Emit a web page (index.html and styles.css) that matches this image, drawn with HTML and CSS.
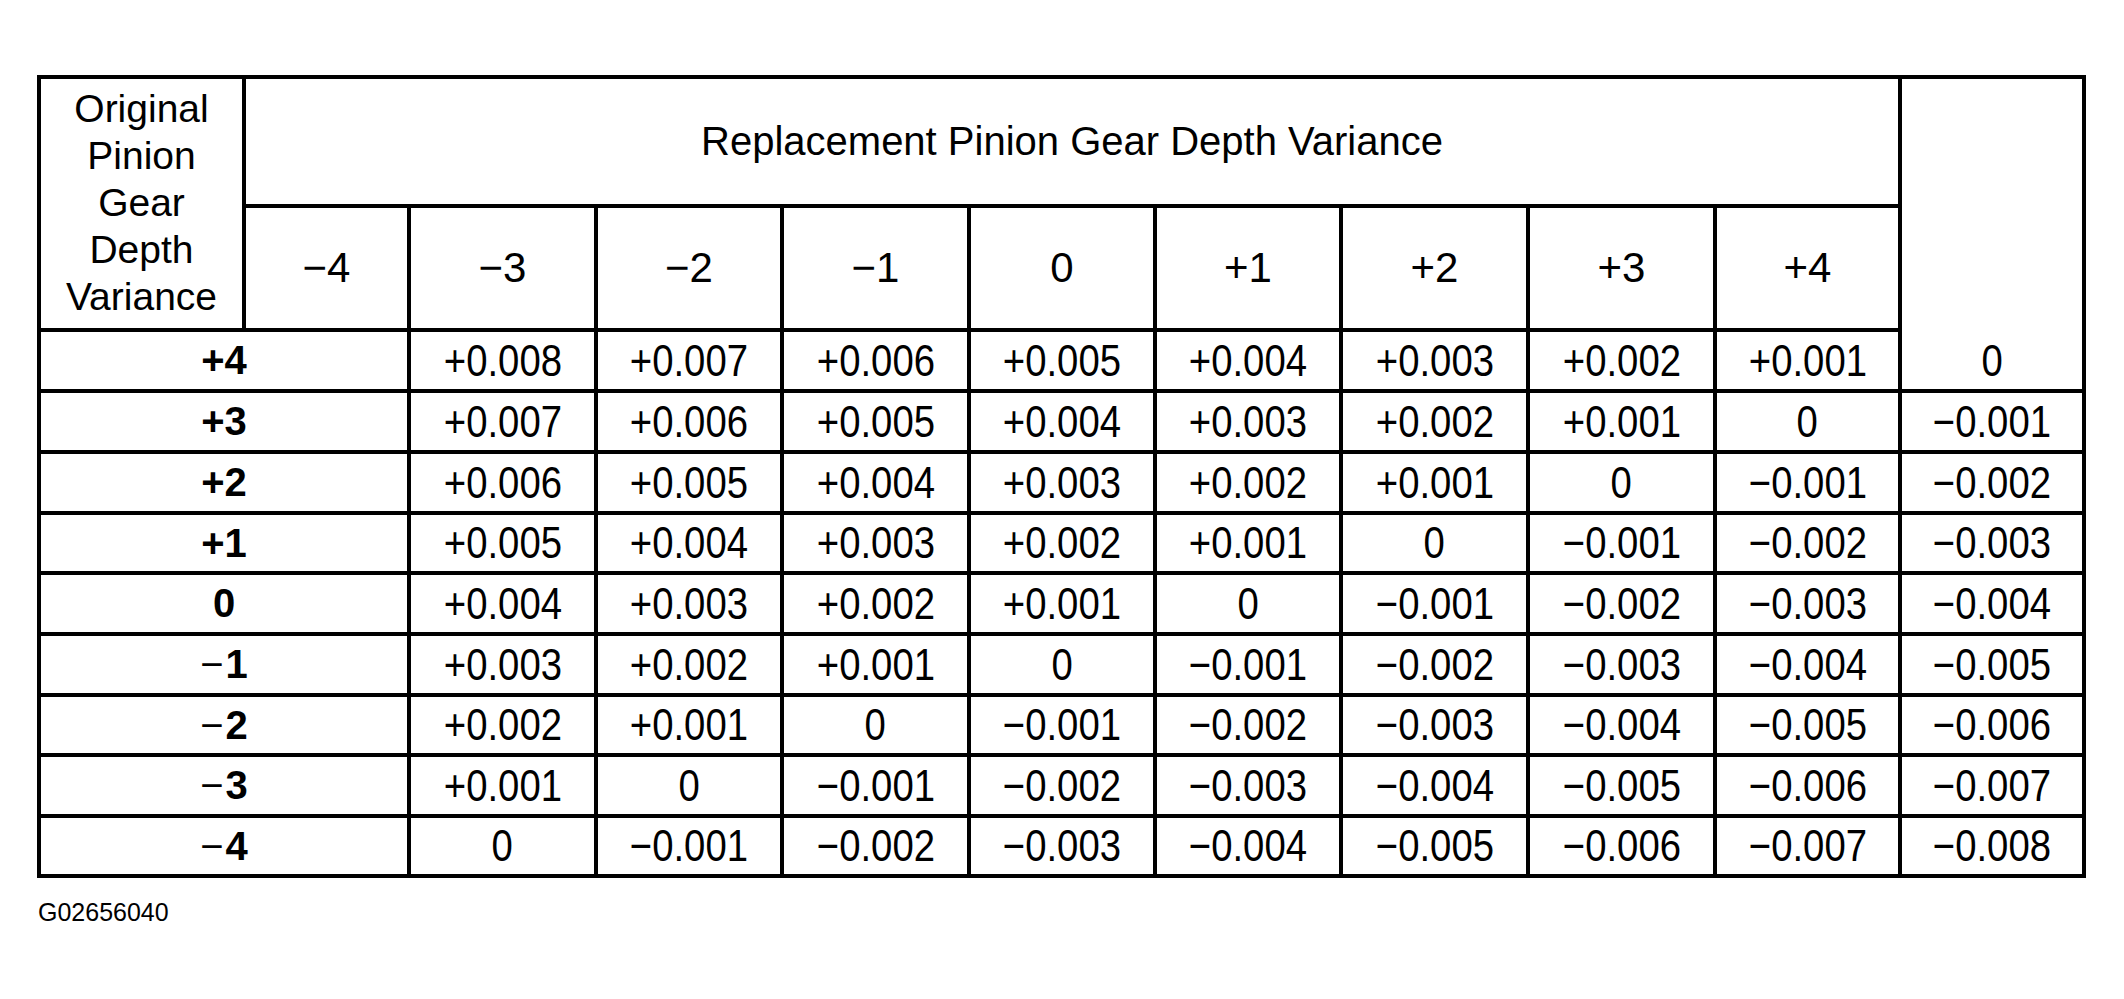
FILE: index.html
```html
<!DOCTYPE html>
<html lang="en">
<head>
<meta charset="utf-8">
<title>Pinion Gear Depth Variance</title>
<link rel="stylesheet" href="styles.css">
</head>
<body>
<div class="chart">
  <div class="grid">
    <div class="cell orig">Original<br>Pinion<br>Gear<br>Depth<br>Variance</div>
    <div class="cell title">Replacement Pinion Gear Depth Variance</div>
    <div class="cell tall"><div class="tall-val val"><span>0</span></div></div>

    <div class="cell head">−4</div>
    <div class="cell head">−3</div>
    <div class="cell head">−2</div>
    <div class="cell head">−1</div>
    <div class="cell head">0</div>
    <div class="cell head">+1</div>
    <div class="cell head">+2</div>
    <div class="cell head">+3</div>
    <div class="cell head">+4</div>

    <div class="cell label">+4</div>
    <div class="cell val"><span>+0.008</span></div><div class="cell val"><span>+0.007</span></div><div class="cell val"><span>+0.006</span></div><div class="cell val"><span>+0.005</span></div><div class="cell val"><span>+0.004</span></div><div class="cell val"><span>+0.003</span></div><div class="cell val"><span>+0.002</span></div><div class="cell val"><span>+0.001</span></div>

    <div class="cell label">+3</div>
    <div class="cell val"><span>+0.007</span></div><div class="cell val"><span>+0.006</span></div><div class="cell val"><span>+0.005</span></div><div class="cell val"><span>+0.004</span></div><div class="cell val"><span>+0.003</span></div><div class="cell val"><span>+0.002</span></div><div class="cell val"><span>+0.001</span></div><div class="cell val"><span>0</span></div><div class="cell val"><span>−0.001</span></div>

    <div class="cell label">+2</div>
    <div class="cell val"><span>+0.006</span></div><div class="cell val"><span>+0.005</span></div><div class="cell val"><span>+0.004</span></div><div class="cell val"><span>+0.003</span></div><div class="cell val"><span>+0.002</span></div><div class="cell val"><span>+0.001</span></div><div class="cell val"><span>0</span></div><div class="cell val"><span>−0.001</span></div><div class="cell val"><span>−0.002</span></div>

    <div class="cell label">+1</div>
    <div class="cell val"><span>+0.005</span></div><div class="cell val"><span>+0.004</span></div><div class="cell val"><span>+0.003</span></div><div class="cell val"><span>+0.002</span></div><div class="cell val"><span>+0.001</span></div><div class="cell val"><span>0</span></div><div class="cell val"><span>−0.001</span></div><div class="cell val"><span>−0.002</span></div><div class="cell val"><span>−0.003</span></div>

    <div class="cell label">0</div>
    <div class="cell val"><span>+0.004</span></div><div class="cell val"><span>+0.003</span></div><div class="cell val"><span>+0.002</span></div><div class="cell val"><span>+0.001</span></div><div class="cell val"><span>0</span></div><div class="cell val"><span>−0.001</span></div><div class="cell val"><span>−0.002</span></div><div class="cell val"><span>−0.003</span></div><div class="cell val"><span>−0.004</span></div>

    <div class="cell label"><span class="minus">−</span>1</div>
    <div class="cell val"><span>+0.003</span></div><div class="cell val"><span>+0.002</span></div><div class="cell val"><span>+0.001</span></div><div class="cell val"><span>0</span></div><div class="cell val"><span>−0.001</span></div><div class="cell val"><span>−0.002</span></div><div class="cell val"><span>−0.003</span></div><div class="cell val"><span>−0.004</span></div><div class="cell val"><span>−0.005</span></div>

    <div class="cell label"><span class="minus">−</span>2</div>
    <div class="cell val"><span>+0.002</span></div><div class="cell val"><span>+0.001</span></div><div class="cell val"><span>0</span></div><div class="cell val"><span>−0.001</span></div><div class="cell val"><span>−0.002</span></div><div class="cell val"><span>−0.003</span></div><div class="cell val"><span>−0.004</span></div><div class="cell val"><span>−0.005</span></div><div class="cell val"><span>−0.006</span></div>

    <div class="cell label"><span class="minus">−</span>3</div>
    <div class="cell val"><span>+0.001</span></div><div class="cell val"><span>0</span></div><div class="cell val"><span>−0.001</span></div><div class="cell val"><span>−0.002</span></div><div class="cell val"><span>−0.003</span></div><div class="cell val"><span>−0.004</span></div><div class="cell val"><span>−0.005</span></div><div class="cell val"><span>−0.006</span></div><div class="cell val"><span>−0.007</span></div>

    <div class="cell label"><span class="minus">−</span>4</div>
    <div class="cell val"><span>0</span></div><div class="cell val"><span>−0.001</span></div><div class="cell val"><span>−0.002</span></div><div class="cell val"><span>−0.003</span></div><div class="cell val"><span>−0.004</span></div><div class="cell val"><span>−0.005</span></div><div class="cell val"><span>−0.006</span></div><div class="cell val"><span>−0.007</span></div><div class="cell val"><span>−0.008</span></div>
  </div>
  <div class="caption">G02656040</div>
</div>
</body>
</html>
```

FILE: styles.css
```css
html, body {
  margin: 0;
  padding: 0;
  background: #fff;
}

body {
  font-family: "Liberation Sans", Arial, Helvetica, sans-serif;
  color: #000;
}

.chart {
  padding: 75px 0 0 37px;
}

.grid {
  display: grid;
  width: max-content;
  grid-template-columns: 205px 165px 187px 186px 187px 186px 186px 187px 187px 185px 184px;
  grid-template-rows: 129px 124px 61px 61px 61px 60px 61px 61px 60px 61px 60px;
  border-left: 4px solid #000;
  border-top: 4px solid #000;
}

.cell {
  border-right: 4px solid #000;
  border-bottom: 4px solid #000;
  display: flex;
  align-items: center;
  justify-content: center;
  text-align: center;
  white-space: nowrap;
}

.orig {
  grid-row: span 2;
  font-size: 39px;
  line-height: 47px;
  padding-bottom: 2px;
}

.title {
  grid-column: span 9;
  font-size: 40px;
}

.tall {
  grid-row: span 3;
  align-items: flex-end;
}

.tall-val {
  height: 57px;
  display: flex;
  align-items: center;
}

.head {
  font-size: 42px;
}

.val {
  font-size: 44px;
}

.val span {
  display: inline-block;
  transform: scaleX(0.87);
}

.label {
  grid-column: span 2;
  font-size: 40px;
  font-weight: bold;
}

.minus {
  font-weight: normal;
  margin-right: 2px;
}

.caption {
  margin-top: 20px;
  margin-left: 1px;
  font-size: 25px;
  line-height: 29px;
}
```
